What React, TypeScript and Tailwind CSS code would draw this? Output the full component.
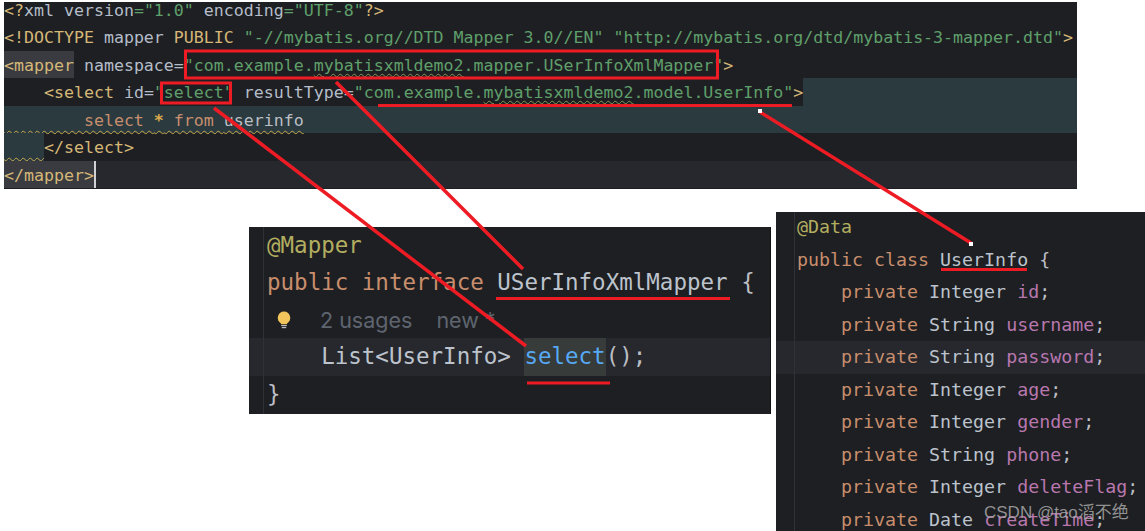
import React from "react";

const TAG = "text-[#d5b778]";
const ATTR = "text-[#b4bdc9]";
const STR = "text-[#5f9f6b]";
const KEY = "text-[#c88e6d]";
const TYPE = "text-[#bcc3cc]";
const FIELD = "text-[#b877ae]";
const PLAIN = "text-[#bcbec4]";
const WAVE_GREEN = "underline decoration-wavy decoration-1 decoration-[#7d9a5a] underline-offset-2";
const WAVE_YELLOW = "underline decoration-wavy decoration-1 decoration-[#c9a94e] underline-offset-[4px]";

const XmlRow = ({ children, className = "" }: { children: React.ReactNode; className?: string }) => (
  <div className={`h-[27.5px] leading-[29px] whitespace-pre ${className}`}>{children}</div>
);

const XmlPanel = () => (
  <div className="ml-[4px] mt-[2px] w-[1073px] h-[187px] overflow-hidden bg-[#1e1f22] font-['DejaVu_Sans_Mono',monospace] text-[16.6px]">
    <div className="-mt-[6.5px]">
      <XmlRow>
        <span className={TAG}>{"<?"}</span>
        <span className={ATTR}>xml version</span>
        <span className={STR}>="1.0"</span>
        <span className={ATTR}> encoding</span>
        <span className={STR}>="UTF-8"</span>
        <span className={TAG}>{"?>"}</span>
      </XmlRow>
      <XmlRow>
        <span className={TAG}>{"<!DOCTYPE "}</span>
        <span className={ATTR}>mapper </span>
        <span className={TAG}>PUBLIC </span>
        <span className={STR}>"-//mybatis.org//DTD Mapper 3.0//EN" "http://mybatis.org/dtd/mybatis-3-mapper.dtd"</span>
        <span className={TAG}>{">"}</span>
      </XmlRow>
      <XmlRow>
        <span className={`${TAG} bg-[#393b40] inline-block h-[27.5px]`}>{"<mapper"}</span>
        <span className={ATTR}> namespace=</span>
        <span className={STR}>
          "com.example.<span className={WAVE_GREEN}>mybatisxmldemo2</span>.mapper.USerInfoXmlMapper"
        </span>
        <span className={TAG}>{">"}</span>
      </XmlRow>
      <XmlRow className="bg-[#2a3a3f]">
        <span className="inline-block h-[27.5px] bg-[#1e1f22]">
          <span className={TAG}>{"    <select"}</span>
          <span className={ATTR}> id=</span>
          <span className={STR}>"select"</span>
          <span className={ATTR}> resultType=</span>
          <span className={STR}>
            "com.example.<span className={WAVE_GREEN}>mybatisxmldemo2</span>.model.UserInfo"
          </span>
          <span className={TAG}>{">"}</span>
        </span>
      </XmlRow>
      <XmlRow className="bg-[#2a3a3f]">
        <span className={WAVE_YELLOW}>
          <span className={KEY}>{"        select "}</span>
          <span className="text-[#d9a94e] font-bold">*</span>
          <span className={KEY}> from </span>
          <span className={PLAIN}>userinfo</span>
        </span>
      </XmlRow>
      <XmlRow>
        <span className={`inline-block h-[27.5px] bg-[#2a3a3f] ${WAVE_YELLOW}`}>{"    "}</span>
        <span className={TAG}>{"</select>"}</span>
      </XmlRow>
      <XmlRow className="bg-[#26282e]">
        <span className={`inline-block h-[27.5px] bg-[#393b40] border-r-2 border-[#cfd1d4] ${TAG}`}>{"</mapper>"}</span>
      </XmlRow>
    </div>
  </div>
);

const InterfacePanel = () => (
  <div className="relative mt-[15px] w-[522px] h-[187px] overflow-hidden bg-[#1e1f22] border-r border-[#101113] font-['DejaVu_Sans_Mono',monospace] text-[22.5px]">
    <div className="-mt-[0.5px]">
      <div className="h-[37.33px] leading-[37.33px] whitespace-pre pl-[18px] text-[#b3ae60]">@Mapper</div>
      <div className="h-[37.33px] leading-[37.33px] whitespace-pre pl-[18px]">
        <span className={KEY}>public interface </span>
        <span className={TYPE}>USerInfoXmlMapper</span>
        <span className={PLAIN}> {"{"}</span>
      </div>
      <div className="h-[37.33px] pl-[18px] flex items-center font-['Inter',sans-serif] text-[21.5px] text-[#5e6570]">
        <svg viewBox="0 0 14 18" className="ml-[10px] w-[14px] h-[18px]">
          <path d="M7 0.5a6.3 6.3 0 0 0-3.6 11.4c.5.4.7.8.7 1.3h5.8c0-.5.2-.9.7-1.3A6.3 6.3 0 0 0 7 .5z" fill="#f2c55c" />
          <rect x="4.2" y="14" width="5.6" height="1.2" fill="#b9bbbe" />
          <rect x="4.8" y="16" width="4.4" height="1.2" fill="#b9bbbe" />
        </svg>
        <span className="ml-[29px]">2 usages</span>
        <span className="ml-[24px]">new *</span>
      </div>
      <div className="h-[37.33px] leading-[37.33px] whitespace-pre pl-[18px] bg-[#26282e]">
        <span className={TYPE}>{"    List<UserInfo> "}</span>
        <span className="inline-block h-[37.33px] bg-[#373b39] text-[#56a8f5]">select</span>
        <span className={PLAIN}>();</span>
      </div>
      <div className="h-[37.33px] leading-[37.33px] whitespace-pre pl-[18px] text-[#bcbec4]">{"}"}</div>
    </div>
    <div className="absolute left-[14px] inset-y-0 w-px bg-[#2f3136]" />
  </div>
);

const fields: [string, string, string][] = [
  ["Integer", "id", ""],
  ["String", "username", ""],
  ["String", "password", "bg-[#26282e]"],
  ["Integer", "age", ""],
  ["Integer", "gender", ""],
  ["String", "phone", ""],
  ["Integer", "deleteFlag", ""],
  ["Date", "createTime", ""],
];

const ClassPanel = () => (
  <div className="relative ml-[5px] w-[369px] h-[319px] overflow-hidden bg-[#1e1f22] font-['DejaVu_Sans_Mono',monospace] text-[18.3px]">
    <div className="-mt-[1px]">
      <div className="h-[32.55px] leading-[32.55px] whitespace-pre pl-[21px] text-[#b3ae60]">@Data</div>
      <div className="h-[32.55px] leading-[32.55px] whitespace-pre pl-[21px]">
        <span className={KEY}>public class </span>
        <span className={TYPE}>UserInfo</span>
        <span className={PLAIN}> {"{"}</span>
      </div>
      {fields.map(([type, name, bg]) => (
        <div key={name} className={`h-[32.55px] leading-[32.55px] whitespace-pre pl-[21px] ${bg}`}>
          <span className={KEY}>{"    private "}</span>
          <span className={TYPE}>{type} </span>
          <span className={FIELD}>{name}</span>
          <span className={PLAIN}>;</span>
        </div>
      ))}
    </div>
    <div className="absolute left-[18px] inset-y-0 w-px bg-[#2f3136]" />
  </div>
);

// red annotations drawn over the screenshots
const Annotations = () => (
  <svg className="absolute inset-0 w-[1145px] h-[531px] pointer-events-none" viewBox="0 0 1145 531" fill="none">
    <g stroke="#ed1c24" strokeWidth="3">
      <rect x="185.5" y="51" width="532" height="27" />
      <rect x="161.5" y="83" width="69" height="20" />
      <path d="M378 105.5H792" />
      <path d="M496 298.5H730" />
      <path d="M527 383H610" />
      <path d="M941 269.5H1027" />
    </g>
    <g stroke="#ed1c24" strokeWidth="3.5">
      <path d="M336 82L523 269" />
      <path d="M214 108L526 346" />
      <path d="M760 112L971 243" />
    </g>
    <rect x="758" y="109" width="4" height="4" fill="#fff" />
    <rect x="969" y="242" width="4" height="4" fill="#fff" />
  </svg>
);

export default function App() {
  return (
    <div className="relative w-[1145px] h-[531px] overflow-hidden bg-white">
      <XmlPanel />
      <div className="flex items-start mt-[23px] ml-[249px]">
        <InterfacePanel />
        <ClassPanel />
      </div>
      <Annotations />
      <div className="absolute left-[984px] top-[500px] font-['Liberation_Sans','Noto_Sans_CJK_SC',sans-serif] text-[17px] text-[#a8a8a8]/85 whitespace-pre">
        CSDN @tao滔不绝
      </div>
    </div>
  );
}
